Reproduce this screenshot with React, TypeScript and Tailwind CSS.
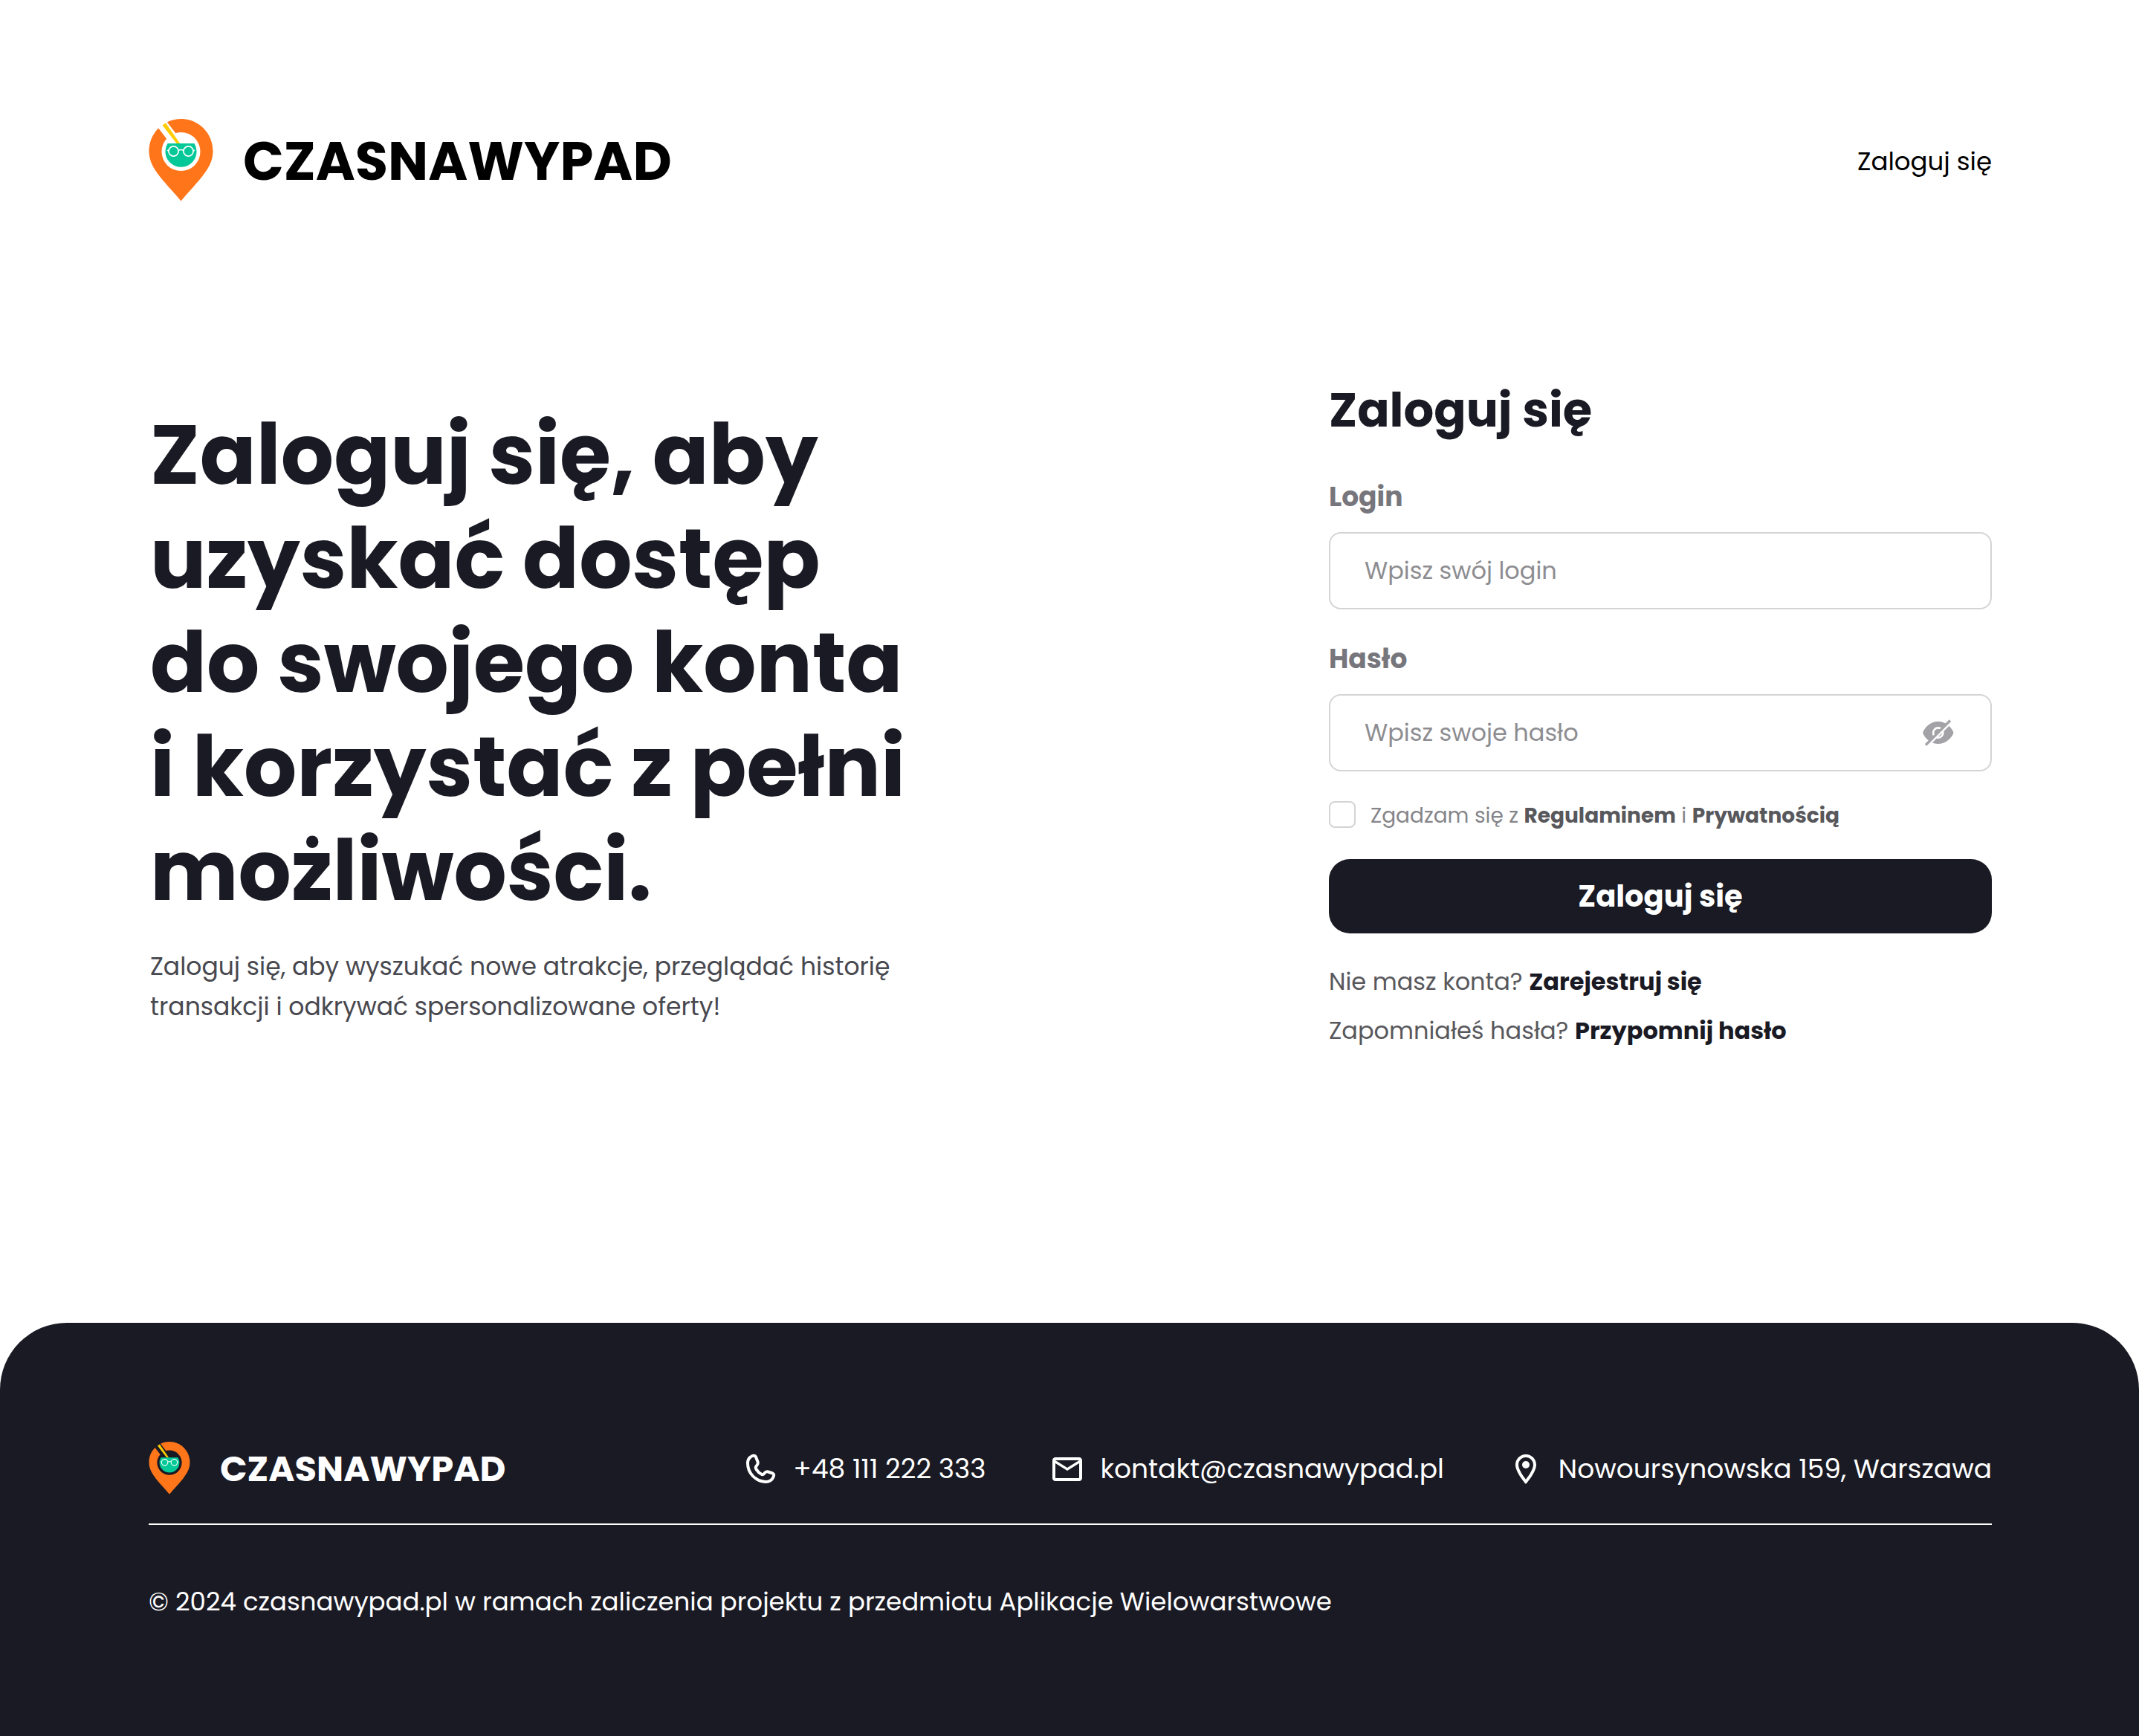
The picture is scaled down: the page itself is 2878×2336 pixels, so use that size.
import React from "react";

function LogoMark({ className, id }: { className: string; id: string }) {
  return (
    <svg viewBox="0 0 87 114" className={className} aria-hidden="true">
      <defs>
        <mask id={id}>
          <rect width="87" height="114" fill="#fff" />
          <circle cx="43.5" cy="44" r="26" fill="#000" />
          <path d="M9 7 L20 -2 L43 28 L32 37 Z" fill="#000" />
        </mask>
      </defs>
      <path
        d="M43.5 0C67.500 0 86.500 19.500 86.500 43.500C86.500 57 80 67 72 77.500C62 90 52 100 43.500 110.500C35 100 25 90 15 77.500C7 67 0.500 57 0.500 43.500C0.500 19.500 19.500 0 43.500 0Z"
        fill="#FF751A"
        mask={`url(#${id})`}
      />
      <path d="M18.500 8.500L23 5.500L42 33H37.500Z" fill="#FFCC00" />
      <path d="M25.500 33H61.500A21 21 0 1 1 25.500 33Z" fill="#04C897" />
      <g fill="none" stroke="#fff" strokeWidth="1.700">
        <circle cx="33.500" cy="43.500" r="6.600" />
        <circle cx="53.500" cy="43.500" r="6.600" />
        <path d="M40.200 42.200Q43.500 40.800 46.800 42.200M25 42.500H27M60 42.500H62" />
      </g>
    </svg>
  );
}

function EyeOff() {
  return (
    <svg viewBox="14 12 48 48" className="size-12" aria-hidden="true">
      <defs>
        <mask id="eye-cut">
          <rect x="14" y="12" width="48" height="48" fill="#fff" />
          <circle cx="37.7" cy="36" r="6.600" fill="none" stroke="#000" strokeWidth="2.600" />
          <path d="M20 57.200L58 19.200" stroke="#000" strokeWidth="3" />
        </mask>
      </defs>
      <path
        d="M17.300 36C17.300 33 25 20.700 37.700 20.700S58.300 33 58.300 36S50.500 51 37.700 51S17.300 39 17.300 36Z"
        fill="#A2A2A7"
        mask="url(#eye-cut)"
      />
      <path d="M21 52.500L54 19.500" stroke="#A2A2A7" strokeWidth="3.400" />
    </svg>
  );
}

const PhoneIcon = () => (
  <svg viewBox="5 12 48 48" className="size-12 shrink-0" fill="none" stroke="currentColor" strokeWidth="4" strokeLinejoin="round" aria-hidden="true">
    <path d="M16 19.500C19 17.300 21.800 17 23 19.500L25.500 26C26.300 28.500 25.500 30 23.500 32C22.300 33.500 22.500 34.500 23.500 36C25.500 39.500 28 41.500 31 43C32.500 43.500 33.500 43 34.500 41.500C36 39.500 37.500 39 39.500 39.500L45.500 41.500C47.800 42.500 47.500 44.500 46.300 47C44.500 51 41 53 36 53C22 52 12 41 12 28C12 24 13 21.500 16 19.500Z" />
  </svg>
);

const MailIcon = () => (
  <svg viewBox="0 0 24 24" className="size-12 shrink-0" fill="currentColor" aria-hidden="true">
    <path d="M20 4H4c-1.100 0-2 .9-2 2v12c0 1.100.9 2 2 2h16c1.100 0 2-.9 2-2V6c0-1.100-.9-2-2-2zm0 14H4V8l8 5 8-5v10zm-8-7L4 6h16l-8 5z" />
  </svg>
);

const MapPinIcon = () => (
  <svg viewBox="0 0 24 24" className="size-12 shrink-0" fill="currentColor" aria-hidden="true">
    <path d="M12 2C8.130 2 5 5.130 5 9c0 5.250 7 13 7 13s7-7.750 7-13c0-3.870-3.130-7-7-7zM7 9c0-2.760 2.240-5 5-5s5 2.240 5 5c0 2.880-2.880 7.190-5 9.880C9.920 16.210 7 11.850 7 9z" />
    <circle cx="12" cy="9" r="2.500" />
  </svg>
);

export default function App() {
  return (
    <div className="flex min-h-screen flex-col bg-white font-['Poppins','Inter',sans-serif] text-[#1A1A24]">
      <header className="flex items-center justify-between pt-40 pr-[198px] pl-[200px]">
        <a href="#" className="flex items-center gap-10 text-black">
          <LogoMark id="header-pin" className="h-[114px] w-[87px]" />
          <span className="text-[72px] leading-[108px] font-bold">CZASNAWYPAD</span>
        </a>
        <a href="#login" className="text-[34px] leading-[48px] text-black">Zaloguj się</a>
      </header>

      <main className="flex justify-between pt-[236px] pr-[198px] pb-[368px] pl-[202px]">
        <section className="pt-[32px]">
          <h1 className="text-[112px] leading-[140px] font-bold">
            Zaloguj się, aby<br />uzyskać dostęp<br />do swojego konta<br />i korzystać z pełni<br />możliwości.
          </h1>
          <p className="mt-8 text-[33px] leading-[54px] text-[#48484F]">
            Zaloguj się, aby wyszukać nowe atrakcje, przeglądać historię<br />
            transakcji i odkrywać spersonalizowane oferty!
          </p>
        </section>

        <form id="login" className="w-[892px]" onSubmit={(e) => e.preventDefault()}>
          <h2 className="text-[64px] leading-[84px] font-bold">Zaloguj się</h2>
          <label htmlFor="user" className="mt-12 block text-[36px] leading-[54px] font-bold text-[#76767C]">Login</label>
          <input id="user" placeholder="Wpisz swój login" className="mt-5 h-[104px] w-full rounded-2xl border-2 border-[#D4D4D6] px-[46px] text-[32px] placeholder:text-[#8D8D91]" />
          <label htmlFor="password" className="mt-10 block text-[36px] leading-[54px] font-bold text-[#76767C]">Hasło</label>
          <div className="mt-5 flex h-[104px] items-center rounded-2xl border-2 border-[#D4D4D6] px-[46px]">
            <input id="password" type="password" placeholder="Wpisz swoje hasło" className="min-w-0 flex-1 text-[32px] outline-none placeholder:text-[#8D8D91]" />
            <button type="button" aria-label="Pokaż hasło"><EyeOff /></button>
          </div>
          <div className="mt-10 flex items-start gap-5">
            <input id="terms" type="checkbox" className="size-9 appearance-none rounded-lg border-2 border-[#D4D4D6] checked:bg-[#1A1A24]" />
            <label htmlFor="terms" className="text-[28px] leading-10 text-[#85858A]">
              Zgadzam się z <a href="#" className="font-bold text-[#58585C]">Regulaminem</a> i <a href="#" className="font-bold text-[#58585C]">Prywatnością</a>
            </label>
          </div>
          <button type="submit" className="mt-[38px] h-[100px] w-full rounded-[28px] bg-[#1A1A24] text-[40px] font-bold text-white">Zaloguj się</button>
          <p className="mt-10 text-[32px] leading-[50px] text-[#58585C]">
            Nie masz konta? <a href="#" className="font-bold text-[#1A1A24]">Zarejestruj się</a>
          </p>
          <p className="mt-4 text-[32px] leading-[50px] text-[#58585C]">
            Zapomniałeś hasła? <a href="#" className="font-bold text-[#1A1A24]">Przypomnij hasło</a>
          </p>
        </form>
      </main>

      <footer className="flex-1 rounded-t-[90px] bg-[#1A1A24] pt-40 pr-[198px] pl-[200px] text-white">
        <div className="flex items-center justify-between border-b-2 border-white pb-[37px]">
          <a href="#" className="flex items-center gap-10">
            <LogoMark id="footer-pin" className="h-[73px] w-14" />
            <span className="text-[48px] leading-[72px] font-bold">CZASNAWYPAD</span>
          </a>
          <ul className="flex gap-[86px] text-[36px] leading-[54px]">
            <li className="flex items-center gap-5"><PhoneIcon />+48 111 222 333</li>
            <li className="flex items-center gap-5"><MailIcon />kontakt@czasnawypad.pl</li>
            <li className="flex items-center gap-5"><MapPinIcon />Nowoursynowska 159, Warszawa</li>
          </ul>
        </div>
        <p className="mt-[76px] text-[34px] leading-[54px]">© 2024 czasnawypad.pl w ramach zaliczenia projektu z przedmiotu Aplikacje Wielowarstwowe</p>
      </footer>
    </div>
  );
}
